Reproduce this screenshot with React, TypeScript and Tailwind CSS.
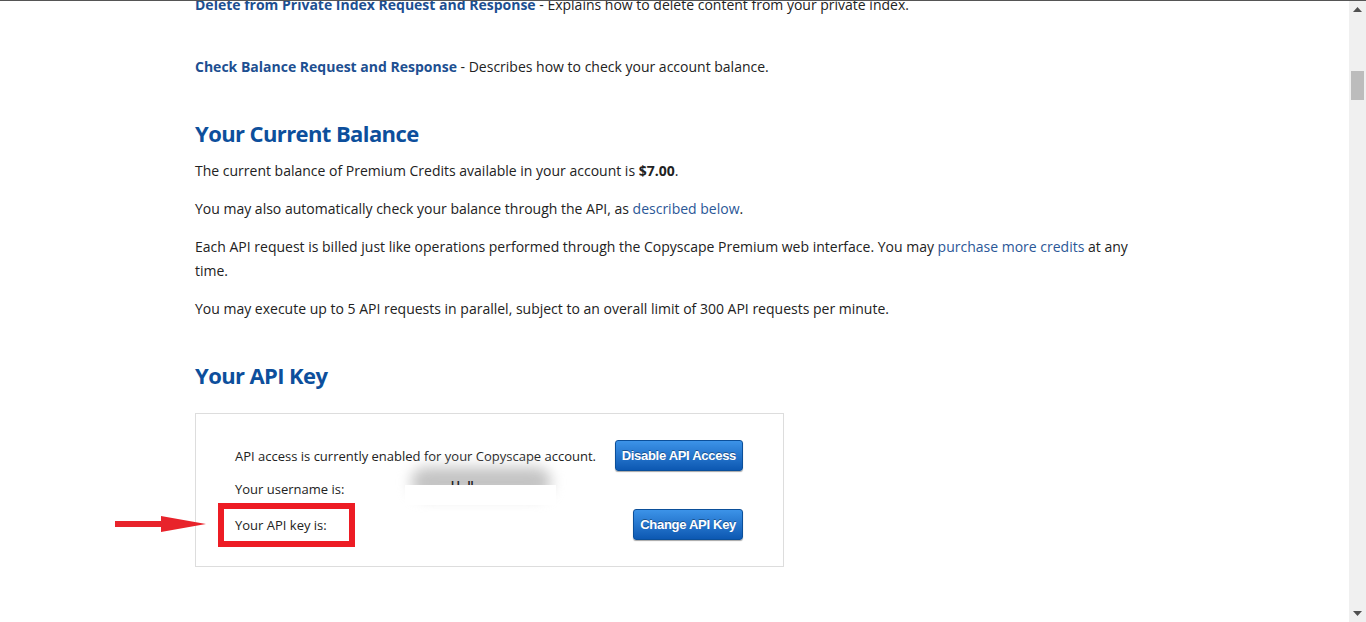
import React from "react";

function Scrollbar() {
  return (
    <div className="w-[17px] h-full bg-[#f0f0f0] flex flex-col items-center">
      <div className="h-[17px] flex items-center justify-center">
        <svg width="9" height="5" viewBox="0 0 9 5"><path d="M0 5 L4.5 0 L9 5 Z" fill="#505050" /></svg>
      </div>
      <div className="mt-[53px] w-[13px] h-[29px] bg-[#bcbcbc]" />
      <div className="flex-1" />
      <div className="h-[17px] flex items-center justify-center">
        <svg width="9" height="5" viewBox="0 0 9 5"><path d="M0 0 L9 0 L4.5 5 Z" fill="#505050" /></svg>
      </div>
    </div>
  );
}

function BlueButton({ children }: { children: React.ReactNode }) {
  return (
    <button
      className="h-[31px] px-[6px] rounded-[3px] border border-[#0b4f9a] bg-gradient-to-b from-[#3c93e8] to-[#0c58b2] text-white font-bold text-[13px] tracking-[-0.3px] leading-none shadow-[0_1px_1px_rgba(0,0,0,0.35)] [text-shadow:0_-1px_0_rgba(0,0,0,0.35)]"
      style={{ fontFamily: '"Liberation Sans", Arial, sans-serif' }}
    >
      {children}
    </button>
  );
}

export default function App() {
  return (
    <div
      className="w-[1366px] h-[622px] overflow-hidden bg-white flex flex-col text-[#222]"
      style={{ fontFamily: '"Open Sans", "Noto Sans", sans-serif' }}
    >
      <div className="h-px bg-[#555] w-full" />
      <div className="flex flex-1 min-h-0">
        <div className="flex-1 min-w-0 overflow-hidden">
          <div className="ml-[195px] w-[945px] text-[14px] leading-[24px]">
            <p className="-mt-[8px]">
              <a className="font-bold text-[#1d4f91]">Delete from Private Index Request and Response</a> - Explains how to delete content from your private index.
            </p>
            <p className="mt-[38px]">
              <a className="font-bold text-[#1d4f91]">Check Balance Request and Response</a> - Describes how to check your account balance.
            </p>
            <h2 className="mt-[39px] text-[22px] leading-[30px] font-bold text-[#0d4f9c] tracking-[-0.6px]">Your Current Balance</h2>
            <p className="mt-[11px]">
              The current balance of Premium Credits available in your account is <b>$7.00</b>.
            </p>
            <p className="mt-[14px]">
              You may also automatically check your balance through the API, as <a className="text-[#2b5797]">described below</a>.
            </p>
            <p className="mt-[14px]">
              Each API request is billed just like operations performed through the Copyscape Premium web interface. You may <a className="text-[#2b5797]">purchase more credits</a> at any time.
            </p>
            <p className="mt-[14px]">
              You may execute up to 5 API requests in parallel, subject to an overall limit of 300 API requests per minute.
            </p>
            <h2 className="mt-[39px] text-[22px] leading-[30px] font-bold text-[#0d4f9c] tracking-[-0.6px]">Your API Key</h2>
            <div className="relative mt-[23px] w-[589px] h-[154px] border border-[#dddddd] text-[13px]">
              <div className="pl-[39px] pr-[40px] pt-[26px]">
                <div className="flex items-center justify-between h-[31px]">
                  <span>API access is currently enabled for your Copyscape account.</span>
                  <BlueButton>Disable API Access</BlueButton>
                </div>
                <div className="flex items-center h-[24px] mt-[6px]">
                  <span className="w-[170px]">Your username is:</span>
                  <div className="relative w-[151px] h-[24px]">
                    <div className="absolute left-[6px] -top-[10px] w-[140px] h-[30px] rounded-full bg-[#c4c4c4] blur-[7px]" />
                    <div className="absolute left-[46px] top-[4px] w-[44px] h-[4px] text-[#222] overflow-hidden text-[10px] leading-[8px] font-bold">l l&nbsp;&nbsp;&nbsp;ll</div>
                    <div className="absolute left-0 top-[8px] w-[151px] h-[20px] bg-white" />
                  </div>
                </div>
                <div className="flex items-center justify-between h-[31px] mt-[8px]">
                  <span>Your API key is:</span>
                  <BlueButton>Change API Key</BlueButton>
                </div>
              </div>
              <div className="absolute left-[22px] top-[89px] w-[137px] h-[44px] border-[6px] border-[#ed1c24]" />
              <svg className="absolute left-[-81px] top-[101px]" width="92" height="18" viewBox="0 0 92 18">
                <path d="M0 6 L46 6 L46 1 L91 9 L46 17 L46 12 L0 12 Z" fill="#e8232b" />
              </svg>
            </div>
          </div>
        </div>
        <Scrollbar />
      </div>
    </div>
  );
}
